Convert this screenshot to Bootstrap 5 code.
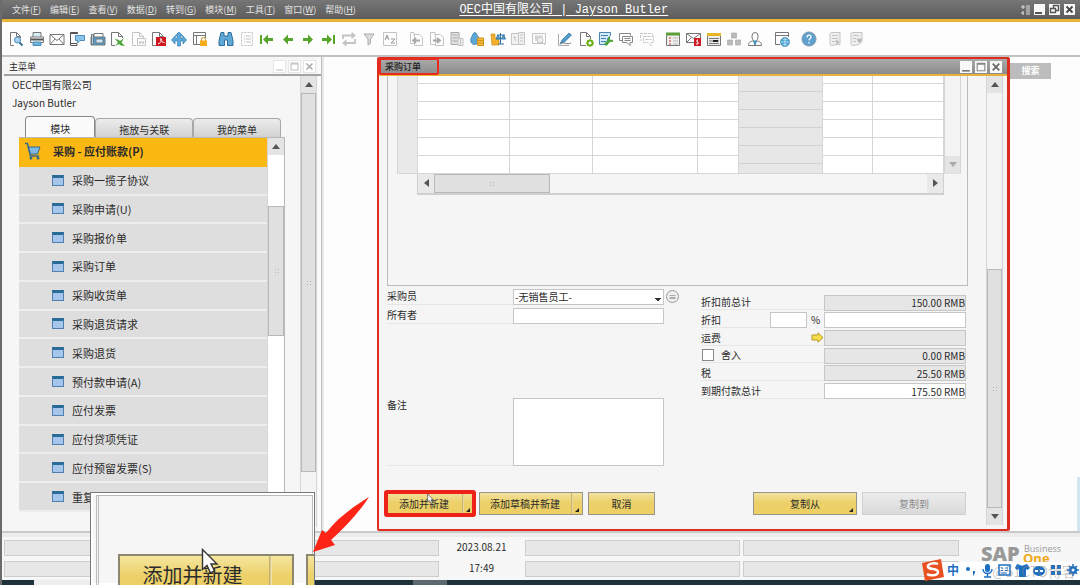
<!DOCTYPE html>
<html lang="zh-CN">
<head>
<meta charset="utf-8">
<meta name="viewport" content="width=device-width, initial-scale=1">
<title>OEC中国有限公司 | Jayson Butler</title>
<link href="https://cdn.jsdelivr.net/npm/bootstrap@5.3.0/dist/css/bootstrap.min.css" rel="stylesheet">
<style>
  body { font-family: "Noto Sans CJK SC", "Noto Sans", sans-serif; font-size: 10px; line-height: 14px; color: #2b2b2b; background: #fdfdfd; }
  a { color: inherit; text-decoration: none; }
  button { font: inherit; color: inherit; }
  svg { display: block; }
  .shell { min-height: 100vh; border-left: 2px solid #6b6b6b; }

  /* menu bar */
  .menubar { height: 22px; padding: 0 5px 0 10px; color: #e4e4e4; background: linear-gradient(#767676, #5c5c5c); border-bottom: 3px solid #e9b435; }
  .menubar nav { gap: 9px; font-size: 9px; flex: 11 0 0; white-space: nowrap; }
  .menubar h1 { font: 12px/14px "Liberation Mono", "Noto Sans CJK SC", monospace; color: #fff; text-decoration: underline; text-underline-offset: 2px; white-space: pre; }
  .menubar .ends { flex: 10 0 0; gap: 4px; }
  .sqbtn { width: 11px; height: 11px; padding: 0; border: 0; background: #f8f8f8; }
  .sqbtn svg { width: 100%; height: 100%; }

  /* tool bar */
  .tools { height: 35px; padding-left: 4px; gap: 6px; background: #fdfdfd; border-bottom: 2px solid #c2c2c2; }
  .tools .set { display: flex; }
  .tools button { flex: 1 0 0; padding: 0; border: 0; background: none; display: flex; justify-content: center; }
  .tools svg { width: 16px; height: 16px; fill: none; stroke: #777; }
  .s10 { width: 204px; } .s9 { width: 184px; } .s7 { width: 143px; } .s5 { width: 102px; } .s2 { width: 41px; } .s1 { width: 21px; }
  .tools .off svg { stroke: #c4c4c4; }

  /* main menu panel */
  .side { width: 320px; padding: 2px 0 0 2px; background: #f6f6f6; border-right: 1px solid #bdbdbd; box-shadow: inset -3px 0 #fbfbfb; }
  .side-head { height: 17px; padding: 0 6px 0 5px; gap: 4px; font-size: 9px; border-bottom: 2px solid #a3a3a3; }
  .side-head .sqbtn { background: #fff; outline: 1px solid #e6e6e6; }
  .who { line-height: 18px; padding-left: 8px; }
  .side-main { padding-left: 15px; padding-right: 15px; }
  .tabs { gap: 0; padding: 0 4px 0 6px; height: 21px; }
  .tabs button { border: 1px solid #a8a8a8; border-bottom: 0; border-radius: 4px 4px 0 0; background: linear-gradient(#ececec, #d2d2d2); padding: 3px 0 0; margin-top: 2px; }
  .tabs button.on { background: #fbfbfb; margin-top: 0; padding-top: 4px; border-color: #888; }
  .tree-box { border: solid #b8b8b8; border-width: 1px 1px 0 0; }
  .tree { height: 374px; }
  .tree li { flex: 1 0 0; background: #dedede; border-bottom: 2px solid #eee; font-size: 11px; }
  .tree li a { display: flex; align-items: center; height: 100%; padding-left: 33px; gap: 8px; }
  .tree li.top { background: #fbb813; border-color: #fbb813; font-weight: 700; }
  .tree li.top a { padding-left: 5px; gap: 11px; }
  .win-ic { width: 12px; height: 11px; background: #a6c5ea; border: 1px solid #4f7fb0; border-top: 3px solid #276b96; }
  .bar { width: 17px; flex: none; background: #f4f4f4; border: solid #d5d5d5; border-width: 0 1px; }
  .bar .cap { height: 17px; background: #e4e4e4; display: grid; place-items: center; }
  .bar-out { margin-right: 4px; }
  .thumb { background: #e0e0e0; border: 1px solid #b9b9b9; display: grid; place-items: center; color: #aaa; }
  .grip { width: 5px; height: 5px; background: radial-gradient(circle, #b5b5b5 1px, transparent 1px) 0 0 / 3px 3px; }
  .tri { width: 0; height: 0; border: 4px solid transparent; }
  .tri.up { border-bottom: 5px solid #555; border-top: 0; } .tri.dn { border-top: 5px solid #555; border-bottom: 0; }
  .tri.lf { border-right: 5px solid #555; border-left: 0; } .tri.rt { border-left: 5px solid #555; border-right: 0; }
  .tri.pale { border-top-color: #aaa; }

  /* purchase order window */
  .gapcol { width: 55px; border-left: 2px solid #e8e8e8; }
  .order { border: 2px solid #dd2d20; border-right-width: 3px; border-radius: 2px; background: #f5f5f5; }
  .order-head { height: 17px; padding: 0 5px 0 0; gap: 3px; background: linear-gradient(#aaa, #8c8c8c); border-bottom: 2px solid #eab23b; }
  .order-head h2 { width: 60px; height: 17px; padding-left: 4px; margin: 0 auto 0 0; font-size: 9px; line-height: 13px; color: #222; border: 2px solid #ea2a1d; border-radius: 2px; }
  .order-head .sqbtn { width: 12px; height: 12px; }
  .matrix { margin: 0 18px 0 8px; height: 210px; padding: 0 6px 0 9px; border: solid #bcbcbc; border-width: 0 1px 1px; }
  .grid-tab { width: 100%; border-collapse: collapse; table-layout: fixed; background: #fff; }
  .grid-tab td { height: 18px; padding: 0; border: 1px solid #d6d6d6; }
  .grid-tab tr:first-child td { height: 7px; border-top: 0; }
  .grid-tab td.hd { background: #e9e9e9; }
  .grid-tab td.shade { background: repeating-linear-gradient(#e7e7e7 0 17px, #d2d2d2 17px 18px) 0 -2px; }
  .hscroll { height: 21px; margin: 0 17px 0 20px; border: 1px solid #cfcfcf; border-top: 0; border-bottom-width: 2px; }
  .hscroll .cap { width: 16px; background: #e9e9e9; display: grid; place-items: center; }
  .fields { margin: 0 20px 0 8px; }
  .field-l { display: grid; grid-template-columns: 126px 151px 24px; grid-auto-rows: 16px; row-gap: 3px; padding-top: 3px; }
  .field-l label, .tot > div > label, .tot .lb { border-bottom: 1px solid #e6e6e6; }
  .field-l .memo { grid-row: 3; margin-top: 71px; height: 68px; }
  .field-l input, .field-l select, .field-l textarea, .tot input { width: 100%; height: 16px; padding: 0 1px; border: 1px solid #c6c6c6; background: #fff; color: #2b2b2b; font: inherit; border-radius: 0; appearance: none; min-width: 0; }
  .field-l textarea.memo { height: 68px; resize: none; }
  .field-l select { background: #fff conic-gradient(from -45deg at 50% 100%, #333 90deg, transparent 0) right 2px bottom 3px / 6px 3px no-repeat; }
  .info { width: 13px; height: 13px; border: 1px solid #999; border-radius: 50%; padding: 0; font-size: 8px; line-height: 10px; color: #777; background: #eee; margin: 1px 0 0 2px; }
  .tot { width: 265px; height: 106px; margin-top: 8px; display: grid; grid-template-rows: repeat(6, 1fr); }
  .tot > div { display: grid; grid-template-columns: 69px 37px 17px 142px; align-items: center; }
  .tot .lb { grid-column: 1 / 4; display: flex; align-items: center; }
  .tot input.val { text-align: right; padding: 0; grid-column: 4; }
  .tot input[readonly].calc { background: #e6e6e6; }
  .tot input[type=checkbox] { width: 12px; height: 12px; border-color: #888; margin: 0 7px 0 1px; }
  .acts { margin: auto 20px 14px 7px; gap: 5px; height: 23px; }
  .gold { position: relative; height: 23px; padding: 0; border: 1px solid #98948a; background: linear-gradient(#f3e2a0, #ecd06a 45%, #edcf62); }
  .gold.more::after { content: ""; position: absolute; right: 3px; bottom: 2px; border: 2px solid transparent; border-right-color: #222; border-bottom-color: #222; }
  .gold.split { padding-right: 12px; background: linear-gradient(90deg, #b9a45b, #f8eab6) right 9px top / 2px 100% no-repeat, linear-gradient(#f3e2a0, #ecd06a 45%, #edcf62); }
  .grey { height: 23px; padding: 0; border: 1px solid #cfcfcf; background: linear-gradient(#ececec, #dadada); color: #8b8b8b; }
  .ring { outline: 4px solid #ee2218; outline-offset: -2px; border-radius: 1px; }
  .w88 { width: 88px; } .w104 { width: 104px; } .w67 { width: 67px; }
  .find { width: 41px; height: 16px; margin-top: 6px; border: 0; padding: 0; color: #fff; background: #bcbcbc; font-weight: 700; font-size: 9px; }
  .rightcol { width: 70px; }
  .edge { width: 3px; height: 54px; background: #d3e6f0; }

  /* status bar */
  .status { height: 49px; padding: 7px 4px 0 2px; background: #f7f7f7; border-top: 2px solid #c9c9c9; box-shadow: inset 0 4px #ececec; display: grid; grid-template-columns: 1fr 1fr 80px 1fr 1fr 114px; grid-template-rows: 16px 16px; gap: 5px 3px; }
  .slot { background: #e7e7e7; border: 1px solid #cdcdcd; }
  .status time { text-align: center; line-height: 14px; }
  .status .brand { grid-row: 1 / 3; grid-column: 6; padding-left: 19px; padding-top: 4px; }
  .taskbar { height: 5px; background: #1d323b; margin-left: -2px; }
  .taskbar .lite { width: 60px; margin-left: 34px; background: #eee; }
  .taskbar .task { width: 34px; margin-left: 319px; background: #5c6a70; }

  /* things that float over the desktop */
  .ime { position: absolute; right: 0; bottom: 5px; width: 150px; height: 18px; background: #fff; }
  .ime svg { width: 158px; height: 24px; margin: -4px 0 0 -8px; }
  .wm { position: absolute; right: 4px; top: 0; font-size: 14px; line-height: 18px; color: rgba(130,130,130,.45); }
  .lens { position: absolute; left: 88px; bottom: 0; width: 225px; height: 93px; background: #f6f6f6; border: 1px solid #777; border-bottom: 0; box-shadow: inset 0 0 0 2px #fff; overflow: hidden; padding: 61px 2px 0 27px; }
  .lens::before { content: ""; position: absolute; inset: 2px 1px 0 5px; border: 1px solid #bbb; border-width: 1px 1px 0 3px; border-left-style: double; }
  .lens button { height: 42px; font-size: 20px; border: 2px solid #8d876f; background: linear-gradient(#f6e79f, #ecd06a 50%, #edcf62); padding: 0; position: relative; flex: none; }
  .lens .big { width: 176px; padding-right: 27px; background: linear-gradient(90deg, #b9a45b, #fbf0c0) right 20px top / 3px 100% no-repeat, linear-gradient(#f6e79f, #ecd06a 50%, #edcf62); }
  .lens .next { width: 30px; margin-left: 12px; }
  .ptr { position: absolute; }
  .arrow { position: absolute; left: 310px; bottom: 32px; }
</style>
</head>
<body>
<div class="shell d-flex flex-column position-relative overflow-hidden">

  <header class="menubar d-flex align-items-center">
    <nav class="d-flex" aria-label="菜单栏">
      <a href="#">文件(<u>F</u>)</a><a href="#">编辑(<u>E</u>)</a><a href="#">查看(<u>V</u>)</a><a href="#">数据(<u>D</u>)</a><a href="#">转到(<u>G</u>)</a><a href="#">模块(<u>M</u>)</a><a href="#">工具(<u>T</u>)</a><a href="#">窗口(<u>W</u>)</a><a href="#">帮助(<u>H</u>)</a>
    </nav>
    <h1 class="m-0">OEC中国有限公司 | Jayson Butler</h1>
    <div class="ends d-flex justify-content-end align-items-center">
      <svg width="9" height="10" viewBox="0 0 9 10" stroke="#ddd" fill="none"><path d="M2 0v4M0 2h4M2 6v4M0 8h3M5 1h4M5 3h4M5 5h4M5 7h4M5 9h4"/></svg>
      <button class="sqbtn" aria-label="最小化"><svg viewBox="0 0 11 11"><path d="M1 9h7" stroke="#555" stroke-width="2"/></svg></button>
      <button class="sqbtn" aria-label="还原"><svg viewBox="0 0 11 11" fill="none" stroke="#555"><path d="M4.500 4V1.500h5v5H7M1.500 4.500h5v4h-5z" stroke-width="1.400"/></svg></button>
      <button class="sqbtn" aria-label="关闭"><svg viewBox="0 0 11 11"><path d="M2.500 2.500l6 6M8.500 2.500l-6 6" stroke="#444" stroke-width="1.800"/></svg></button>
    </div>
  </header>

  <div class="tools d-flex align-items-center" role="toolbar" aria-label="工具栏">
    <div class="set s10">
      <button aria-label="预览"><svg viewBox="0 0 16 16"><path d="M6 14.500H2.500v-13h6l4 4V7M8.500 1.500v4h4"/><circle cx="9.500" cy="9" r="3" fill="#a9d2ee" stroke="#4d8db8"/><path d="M11.500 11.500l3 3" stroke="#3c6f95" stroke-width="2"/></svg></button>
      <button aria-label="打印"><svg viewBox="0 0 16 16"><path d="M4 6V1.500h8V6" fill="#d8ecf8"/><path d="M1.500 6h13v5.500h-13z" fill="#fff"/><path d="M2 8.500h12" stroke="#555" stroke-width="2"/><path d="M4 11h8v3.500H4z" fill="#6db3dc" stroke="#4d8db8"/></svg></button>
      <button aria-label="邮件"><svg viewBox="0 0 16 16"><path d="M1 3.500h14v10H1zM1 3.500l7 6 7-6M1 13.500l5-5.500M15 13.500L10 8" fill="#fff"/></svg></button>
      <button aria-label="短信"><svg viewBox="0 0 16 16"><path d="M8 12.500v2H1.500v-13h7V3" stroke="#555"/><path d="M2 2.500h6M2 12.500h6" stroke="#555"/><path d="M6.500 4.500h9v5H11L8.500 12V9.500h-2z" fill="#8cc3e8" stroke="#4d8db8"/></svg></button>
      <button aria-label="传真"><svg viewBox="0 0 16 16" stroke="#3b7dae"><path d="M4 6V2.500h9V6" fill="#fff" stroke="#777"/><path d="M1 6h14v8H1z" fill="#4f9fd4"/><path d="M1.500 3.500h2v10h-2z" fill="#9fd0ef"/><path d="M6 8h7v4H6z" fill="#cfe8f7"/></svg></button>
      <button aria-label="导出到 Excel"><svg viewBox="0 0 16 16"><path d="M5 14.500H1.500v-13h7l4 4V7M8.500 1.500v4h4"/><path d="M5 8l3 .5L10 10l4-3-2.500 4.500L15 15l-4-.5L9 13l-4 2 3-3.500z" fill="#4ba53b" stroke="none"/></svg></button>
      <button class="off" aria-label="导出到 Word"><svg viewBox="0 0 16 16"><path d="M5 14.500H1.500v-13h7l4 4V7M8.500 1.500v4h4M6.500 7.500h8v7h-8zM8 10l1 3 1.500-3 1.500 3 1-3"/></svg></button>
      <button aria-label="导出到 PDF"><svg viewBox="0 0 16 16"><path d="M5 14.500H1.500v-13h7l4 4V6M8.500 1.500v4h4"/><path d="M5 6h10v9H5z" fill="#cf1820" stroke="none"/><path d="M7 13c3-1 4-4 3-5.500-1.500 1 1 4 3.500 4" stroke="#fff"/></svg></button>
      <button aria-label="启动应用"><svg viewBox="0 0 16 16"><path d="M8 1l4 4H9.500v2H12V5l3.500 4L12 13v-3H9.500v5h-3v-5H4v3L.5 9 4 5v2h2.500V5H4z" fill="#5aa9da" stroke="#3680b3" stroke-width=".7"/></svg></button>
      <button aria-label="锁定屏幕"><svg viewBox="0 0 16 16"><path d="M8 13.500H1.500v-12h12V7M1.500 4.500h12M4.500 4.500v9"/><path d="M9.500 10V8.500a2 2 0 014 0V10" stroke="#c58a10"/><path d="M8 9.500h7V15H8z" fill="#f5ae1a" stroke="none"/></svg></button>
    </div>
    <div class="set s9">
      <button aria-label="查找"><svg viewBox="0 0 16 16"><path d="M3 1.500h3V5h4V1.500h3l2 8v5H9.500V9h-3v5.500H1v-5z" fill="#5fa9d6" stroke="#2f6c99"/></svg></button>
      <button class="off" aria-label="添加"><svg viewBox="0 0 16 16"><path d="M2.500 1.500h11v13h-11z" stroke-dasharray="2 1"/><path d="M5 5h1M7 5h5M5 8h1M7 8h5M5 11h1M7 11h5"/></svg></button>
      <button aria-label="首条记录"><svg viewBox="0 0 16 16"><path d="M1 4h2v9H1zM4 8.500L9 3.500V7h5v3H9v3.500z" fill="#57a62c" stroke="none"/></svg></button>
      <button aria-label="上一条"><svg viewBox="0 0 16 16"><path d="M3 8.500l5-5V7h5v3H8v3.500z" fill="#57a62c" stroke="none"/></svg></button>
      <button aria-label="下一条"><svg viewBox="0 0 16 16"><path d="M13 8.500l-5-5V7H3v3h5v3.500z" fill="#57a62c" stroke="none"/></svg></button>
      <button aria-label="末条记录"><svg viewBox="0 0 16 16"><path d="M13 4h2v9h-2zM12 8.500L7 3.500V7H2v3h5v3.500z" fill="#57a62c" stroke="none"/></svg></button>
      <button class="off" aria-label="刷新"><svg viewBox="0 0 16 16" stroke-width="1.800"><path d="M2 8V4.500h11M10.500 2l3 2.500-3 2.500M14 8v4H3M5.500 9.500L2.500 12l3 2.500"/></svg></button>
      <button class="off" aria-label="筛选"><svg viewBox="0 0 16 16"><path d="M3 3h10L9.500 8v4.500L7 14V8z" fill="#ddd" stroke="#aaa"/></svg></button>
      <button class="off" aria-label="排序"><svg viewBox="0 0 16 16"><path d="M1.500 1.500h13v13h-13z"/><path d="M3 9l2-5 2 5M4 7h2M9 8h4l-4 4h4" stroke="#999"/></svg></button>
    </div>
    <div class="set s7">
      <button class="off" aria-label="基础凭证"><svg viewBox="0 0 16 16"><path d="M6 4.500V1.500H2.500v11H6M6.500 3.500h5l3 3v8h-8z"/><path d="M12 9.500H5M8 7l-3 2.500L8 12" stroke="#aaa" stroke-width="1.800"/></svg></button>
      <button class="off" aria-label="目标凭证"><svg viewBox="0 0 16 16"><path d="M6 4V1.500H1.500v12H6M6.500 3.500h5l3 3v8h-8z"/><path d="M4 9.500h7M8 7l3 2.500L8 12" stroke="#aaa" stroke-width="1.800"/></svg></button>
      <button class="off" aria-label="毛利"><svg viewBox="0 0 16 16"><path d="M2 1.500h8v12H2z" fill="#e2e2e2" stroke="#aaa"/><path d="M3.500 4h5M3.500 7h5M3.500 10h5" stroke="#aaa"/><path d="M9 7.500h5v7H9zM11.500 8v6" fill="#eee"/></svg></button>
      <button aria-label="付款方式"><svg viewBox="0 0 16 16"><path d="M4 3a2 2 0 013-1l1 2c2 2 3 5 1 8-2 2-6 2-7-1-1-4 1-5 2-8z" fill="#5ba7d6" stroke="#31759f" stroke-width=".7"/><path d="M8.500 7h6v7.500h-6zM8.500 9.500h6M8.500 12h6" fill="#f8be3f" stroke="#d29018"/></svg></button>
      <button aria-label="交易分录"><svg viewBox="0 0 16 16"><path d="M1 3h4v4l4 2v5H2z" fill="#f4b02c" stroke="#c98d18" stroke-width=".7"/><path d="M10.500 2v11M7 4h8M6 8l2-4 2 4zM11.500 8l2-4 2 4zM8 13h6" fill="#5ba7d6" stroke="#2f76a5"/></svg></button>
      <button class="off" aria-label="交易日记账"><svg viewBox="0 0 16 16"><path d="M1.500 2.500h7v11h-7zM8.500 1.500h6v12h-6zM10 4h3M10 7h3M10 10h3M3 6h3M5 6v4" fill="#f1f1f1"/></svg></button>
      <button class="off" aria-label="布局"><svg viewBox="0 0 16 16"><path d="M1.500 2.500h13v10h-13zM4 5h8M4 7h5"/><circle cx="9" cy="9" r="3" fill="#eee"/><path d="M11 11l3 3M5 5v5"/></svg></button>
    </div>
    <div class="set s5">
      <button aria-label="编辑"><svg viewBox="0 0 16 16"><path d="M1.500 3v11.500H12" stroke="#aaa"/><path d="M3 13l2-4 7-7 2.500 2-7 7z" fill="#4f9bcf" stroke="#2e6b93" stroke-width=".7"/><path d="M4 12c3-1 6 2 10 0" stroke="#777"/></svg></button>
      <button aria-label="表单设置"><svg viewBox="0 0 16 16"><path d="M8 14.500H2.500v-13h6l4 4V8M8.500 1.500v4h4"/><circle cx="12" cy="12" r="2.500" stroke="#6fb01b" stroke-width="2"/><path d="M12 8v2M12 14v2M8 12h2M14 12h2M9.500 9.500l1 1M13.500 13.500l1 1M14.500 9.500l-1 1M10.500 13.500l-1 1" stroke="#6fb01b"/></svg></button>
      <button aria-label="查询管理器"><svg viewBox="0 0 16 16"><path d="M1.500 1.500h11v3l-3 3v6h-8z" fill="#d5eaf8" stroke="#4885b5"/><path d="M3 4.500h7M3 7.500h5M3 10.500h5" stroke="#4885b5"/><path d="M7 14l5-5" stroke="#4ba53b" stroke-width="3"/><path d="M11 6v3.500l4 .5" stroke="#4ba53b" stroke-width="2"/></svg></button>
      <button aria-label="消息"><svg viewBox="0 0 16 16"><path d="M1.500 9.500v-7h11v2M1.500 9.500H4M4.500 5.500h10v6H12v3l-3-3H4.500zM6.500 7.500h6M6.500 9.500h6" stroke="#888"/></svg></button>
      <button class="off" aria-label="提醒"><svg viewBox="0 0 16 16"><path d="M1.500 7V2.500h12v2M4.500 5.500h10v6H12v3l-3-3H4.500zM6.500 8.500h6M1 9h2" stroke-dasharray="3 1"/></svg></button>
    </div>
    <div class="set s5">
      <button aria-label="日历"><svg viewBox="0 0 16 16"><path d="M1.500 2.500h13v12h-13z" fill="#eee"/><path d="M1 3h14" stroke="#5d9c3a" stroke-width="3"/><path d="M4 7h2M4 10h2M4 13h2" stroke="#c33"/><path d="M8 7h5M8 10h5M8 13h5" stroke="#bbb"/></svg></button>
      <button aria-label="信息与警报"><svg viewBox="0 0 16 16"><path d="M.5 2.500h14v9H.5zM.5 2.500l7 5 7-5M.5 11.500l5-5" fill="#fff"/><path d="M8 7h7v8H8z" fill="#cb1d23" stroke="none"/><path d="M12 9h-1v2h1v2h-2" stroke="#fff"/></svg></button>
      <button aria-label="仪表板"><svg viewBox="0 0 16 16"><path d="M1.500 2.500h13v12h-13z" fill="#eee"/><path d="M1 3.500h14" stroke="#e6b725" stroke-width="3"/><path d="M3 7.500h10M3 10h10M3 12.500h10" stroke="#777"/><path d="M7 10h5" stroke="#222" stroke-width="2"/></svg></button>
      <button aria-label="关系图"><svg viewBox="0 0 16 16"><path d="M5.500 2h5v5h-5zM1.500 9h5v5h-5zM9.500 9h5v5h-5z" fill="#bbb" stroke="#aaa" stroke-width=".7"/></svg></button>
      <button aria-label="业务伙伴"><svg viewBox="0 0 16 16"><path d="M1.500 14.500c0-4 3-4 5-5C5 8 5 6 5 5a3 3.500 0 016 0c0 1 0 3-1.500 4.500 2 1 5 1 5 5z" fill="#fff"/><path d="M6.500 10L8 14l1.500-4z" fill="#5aa9da" stroke="#3d86b3"/></svg></button>
    </div>
    <div class="set s1"><button aria-label="网页"><svg viewBox="0 0 16 16"><path d="M6 13.500H1.500v-12h13V6M1.500 4.500h13"/><circle cx="11" cy="11" r="4.500" fill="#4fa3d3" stroke="#2d7aa9" stroke-width=".7"/><path d="M6.500 11h9M11 6.500v9M8.500 8c1.500 1 3.500 1 5 0M8.500 14c1.500-1 3.500-1 5 0" stroke="#d7eefa" stroke-width=".7"/></svg></button></div>
    <div class="set s1"><button aria-label="帮助"><svg viewBox="0 0 16 16"><circle cx="8" cy="8" r="7" fill="#5e9fcd" stroke="#7b98ad"/><path d="M6 6.500c0-3 4-3 4-.5 0 1.500-2 1.500-2 3.500M8 11v1.500" stroke="#fff" stroke-width="1.300"/></svg></button></div>
    <div class="set s2">
      <button class="off" aria-label="上一版式"><svg viewBox="0 0 16 16"><path d="M3 2.500l1-1h9v12h-3l-5 1-2-1zM5 4.500h6M5 7.500h6M5 10.500h3" fill="#eee"/><path d="M9 9l3 2-2 2z" fill="#aaa"/></svg></button>
      <button class="off" aria-label="下一版式"><svg viewBox="0 0 16 16"><path d="M3 2.500l1-1h10v9l-3 3-6 1-2-1zM5 4.500h6M5 7.500h3M5 10.500h3" fill="#eee"/><path d="M9 8h5l-2.500 4z" fill="#aaa"/></svg></button>
    </div>
  </div>

  <main class="d-flex flex-grow-1">
    <aside class="side d-flex flex-column flex-shrink-0">
      <div class="side-head d-flex align-items-center">
        <span class="me-auto">主菜单</span>
        <button class="sqbtn" aria-label="最小化"><svg viewBox="0 0 11 11"><path d="M2 9h7" stroke="#bbb"/></svg></button>
        <button class="sqbtn" aria-label="最大化"><svg viewBox="0 0 11 11"><path d="M2 2h7v7H2zM2 3h7" stroke="#bbb" fill="none"/></svg></button>
        <button class="sqbtn" aria-label="关闭"><svg viewBox="0 0 11 11"><path d="M2.500 2.500l6 6M8.500 2.500l-6 6" stroke="#aaa" stroke-width="1.500"/></svg></button>
      </div>
      <div class="d-flex flex-grow-1">
        <div class="flex-grow-1">
          <div class="who">OEC中国有限公司<br>Jayson Butler</div>
          <div class="side-main mt-1">
            <div class="tabs d-flex" role="tablist">
              <button class="on" style="flex:70 0 0" role="tab" aria-selected="true">模块</button>
              <button style="flex:98 0 0" role="tab">拖放与关联</button>
              <button style="flex:88 0 0" role="tab">我的菜单</button>
            </div>
            <div class="tree-box d-flex">
              <ul class="tree list-unstyled m-0 flex-grow-1 d-flex flex-column">
                <li class="top"><a href="#"><svg width="18" height="18" viewBox="0 0 18 18"><path d="M4 5h12l-2.500 7H6z" fill="#7fb9e2" stroke="#34698f"/><path d="M1 1.500h2.500L6.500 14H15" fill="none" stroke="#34698f" stroke-width="1.500"/><circle cx="7" cy="16" r="1.500" fill="#34698f"/><circle cx="14" cy="16" r="1.500" fill="#34698f"/></svg>采购 - 应付账款(P)</a></li>
                <li><a href="#"><i class="win-ic"></i>采购一揽子协议</a></li>
                <li><a href="#"><i class="win-ic"></i>采购申请(U)</a></li>
                <li><a href="#"><i class="win-ic"></i>采购报价单</a></li>
                <li><a href="#"><i class="win-ic"></i>采购订单</a></li>
                <li><a href="#"><i class="win-ic"></i>采购收货单</a></li>
                <li><a href="#"><i class="win-ic"></i>采购退货请求</a></li>
                <li><a href="#"><i class="win-ic"></i>采购退货</a></li>
                <li><a href="#"><i class="win-ic"></i>预付款申请(A)</a></li>
                <li><a href="#"><i class="win-ic"></i>应付发票</a></li>
                <li><a href="#"><i class="win-ic"></i>应付贷项凭证</a></li>
                <li><a href="#"><i class="win-ic"></i>应付预留发票(S)</a></li>
                <li><a href="#"><i class="win-ic"></i>重复</a></li>
              </ul>
              <div class="bar d-flex flex-column bg-white border-end-0">
                <div class="cap"><i class="tri up"></i></div>
                <div style="flex:51 0 0"></div>
                <div class="thumb" style="flex:129 0 0"><i class="grip"></i></div>
                <div style="flex:178 0 0"></div>
              </div>
            </div>
          </div>
        </div>
        <div class="bar bar-out d-flex flex-column mb-1">
          <div class="cap"><i class="tri up"></i></div>
          <div class="thumb" style="flex:379 0 0"><i class="grip"></i></div>
          <div style="flex:55 0 0"></div>
        </div>
      </div>
    </aside>
    <div class="gapcol flex-shrink-0"></div>

    <section class="order d-flex flex-column flex-grow-1">
      <div class="order-head d-flex align-items-center">
        <h2>采购订单</h2>
        <button class="sqbtn" aria-label="最小化"><svg viewBox="0 0 11 11"><path d="M2 9h7" stroke="#777" stroke-width="1.500"/></svg></button>
        <button class="sqbtn" aria-label="最大化"><svg viewBox="0 0 11 11"><path d="M2 2h7v7H2zM2 3h7" stroke="#888" fill="none"/></svg></button>
        <button class="sqbtn" aria-label="关闭"><svg viewBox="0 0 11 11"><path d="M2.500 2.500l6 6M8.500 2.500l-6 6" stroke="#666" stroke-width="1.600"/></svg></button>
      </div>
      <div class="d-flex flex-grow-1">
        <div class="flex-grow-1 d-flex flex-column">
          <div class="matrix">
            <div class="d-flex">
              <table class="grid-tab">
                <colgroup><col style="width:20px"><col style="width:92px"><col style="width:83px"><col style="width:104px"><col style="width:41px"><col style="width:84px"><col style="width:50px"><col style="width:71px"></colgroup>
                <tr><td class="hd" rowspan="6"></td><td></td><td></td><td></td><td></td><td class="shade" rowspan="6"></td><td></td><td></td></tr>
                <tr><td></td><td></td><td></td><td></td><td></td><td></td></tr>
                <tr><td></td><td></td><td></td><td></td><td></td><td></td></tr>
                <tr><td></td><td></td><td></td><td></td><td></td><td></td></tr>
                <tr><td></td><td></td><td></td><td></td><td></td><td></td></tr>
                <tr><td></td><td></td><td></td><td></td><td></td><td></td></tr>
              </table>
              <div class="bar d-flex flex-column justify-content-end border-bottom"><div class="cap"><i class="tri dn pale"></i></div></div>
            </div>
            <div class="hscroll d-flex">
              <div class="cap"><i class="tri lf"></i></div>
              <div class="thumb" style="width:22%"><i class="grip"></i></div>
              <div class="cap ms-auto"><i class="tri rt"></i></div>
            </div>
          </div>
          <div class="fields d-flex justify-content-between align-items-start">
            <div class="field-l">
              <label for="buyer">采购员</label>
              <select id="buyer"><option>-无销售员工-</option></select>
              <button class="info" aria-label="详细信息">≡</button>
              <label for="owner">所有者</label>
              <input id="owner" type="text"><span></span>
              <label class="memo" for="memo">备注</label>
              <textarea class="memo" id="memo"></textarea>
            </div>
            <div class="tot">
              <div><label class="lb" for="t1">折扣前总计</label><input class="val calc" id="t1" readonly value="150.00 RMB"></div>
              <div><label for="t2">折扣</label><input id="t2" type="text"><span class="text-center">%</span><input class="val" aria-label="折扣金额"></div>
              <div><label class="lb" for="t3">运费<svg class="ms-auto" width="13" height="11" viewBox="0 0 13 11"><path d="M1 3h6V.8l5 4.700-5 4.700V8H1z" fill="#f6dc4a" stroke="#b99a1f"/></svg></label><input class="val calc" id="t3" readonly></div>
              <div><label class="lb"><input type="checkbox">舍入</label><input class="val calc" readonly value="0.00 RMB" aria-label="舍入金额"></div>
              <div><label class="lb" for="t5">税</label><input class="val calc" id="t5" readonly value="25.50 RMB"></div>
              <div><label class="lb" for="t6">到期付款总计</label><input class="val" id="t6" value="175.50 RMB"></div>
            </div>
          </div>
          <div class="acts d-flex">
            <button class="gold more split w88 ring">添加并新建</button>
            <button class="gold more split w104">添加草稿并新建</button>
            <button class="gold w67">取消</button>
            <button class="gold more w104 ms-auto">复制从</button>
            <button class="grey w104" disabled>复制到</button>
          </div>
        </div>
        <div class="bar bar-out d-flex flex-column mb-1">
          <div class="cap"><i class="tri up"></i></div>
          <div style="flex:176 0 0"></div>
          <div class="thumb" style="flex:238 0 0"><i class="grip"></i></div>
          <div class="cap"><i class="tri dn"></i></div>
        </div>
      </div>
    </section>
    <div class="rightcol flex-shrink-0 d-flex flex-column align-items-start"><button class="find">搜索</button><span class="edge mt-auto ms-auto"></span></div>
  </main>

  <footer class="status">
    <div class="slot"></div><div class="slot"></div><time>2023.08.21</time><div class="slot"></div><div class="slot"></div>
    <div class="brand">
      <svg width="84" height="28" viewBox="0 0 84 28"><text x="0" y="17" font-family="Open Sans, sans-serif" font-size="20" font-weight="800" fill="#999">SAP</text><text x="43" y="8" font-family="Open Sans, sans-serif" font-size="9" fill="#999">Business</text><text x="42" y="19" font-family="Open Sans, sans-serif" font-size="13" font-weight="700" fill="#f0a81c">One</text></svg>
    </div>
    <div class="slot"></div><div class="slot"></div><time>17:49</time><div class="slot"></div><div class="slot"></div>
  </footer>
  <div class="taskbar d-flex"><span class="lite"></span><span class="task"></span></div>

  <div class="ime">
    <svg viewBox="0 0 158 24" fill="#1b6fc4"><path d="M0 5l19-4 3 18-19 4z" fill="#e8501f"/><path d="M16 6c-4-2-11 0-10 3s10 1 10 5-8 4-11 2" fill="none" stroke="#fff" stroke-width="2.500"/>
      <text x="25" y="17" font-size="12" font-weight="700" font-family="Noto Sans CJK SC, sans-serif">中</text>
      <circle cx="46" cy="11" r="2"/><path d="M51 13h2v2l-2 3z"/>
      <rect x="63" y="6" width="5" height="8" rx="2.500"/><path d="M61 11a4.500 4.500 0 009 0M65.500 16v3M62 19h7" fill="none" stroke="#1b6fc4" stroke-width="1.500"/>
      <path d="M77 7h11v10H77z" fill="none" stroke="#1b6fc4" stroke-width="1.500"/><path d="M79 10h2M83 10h3M79 12.500h2M83 12.500h3M79 15h6" stroke="#1b6fc4"/>
      <path d="M95 6l3 1c1 1 3 1 4 0l3-1 3 4-2.500 2-1.500-1v8h-7v-8l-2 1-2-2z"/>
      <ellipse cx="117" cy="13" rx="6" ry="5"/><path d="M113 13h3M118 13h3" stroke="#fff" stroke-width="2"/>
      <path d="M129 7h4v4h-4zM135 7h4v4h-4zM129 13h4v4h-4zM135 13h4v4h-4z"/>
      <circle cx="151" cy="12" r="4"/><path d="M151 6v12M145 12h12M147 8l8 8M155 8l-8 8" stroke="#1b6fc4" stroke-width="1.500"/><circle cx="151" cy="12" r="1.500" fill="#fff"/></svg>
    <span class="wm">@51CTO博客</span>
  </div>

  <div class="lens d-flex">
    <button class="big">添加并新建</button><button class="next" aria-label="下一个"></button>
  </div>
  <svg class="ptr" style="left:199px;bottom:9px" width="20" height="28" viewBox="0 0 20 28"><path d="M1.500 1.500v20l4.500-4 3.500 7.500 4-2-3.500-7h6z" fill="#fff" stroke="#333" stroke-width="1.400"/></svg>
  <svg class="ptr" style="left:425px;bottom:80px" width="8" height="12" viewBox="0 0 20 28"><path d="M1.500 1.500v20l4.500-4 3.500 7.500 4-2-3.500-7h6z" fill="#fff" stroke="#555" stroke-width="2"/></svg>
  <svg class="arrow" width="58" height="57" viewBox="0 0 58 57"><path d="M57 1C44 9 26 21 14 37l-4-3L1 56l22-7-4-5C33 31 46 18 57 1z" fill="#fb2416"/></svg>
</div>
<script src="https://cdn.jsdelivr.net/npm/bootstrap@5.3.0/dist/js/bootstrap.bundle.min.js"></script>
</body>
</html>
